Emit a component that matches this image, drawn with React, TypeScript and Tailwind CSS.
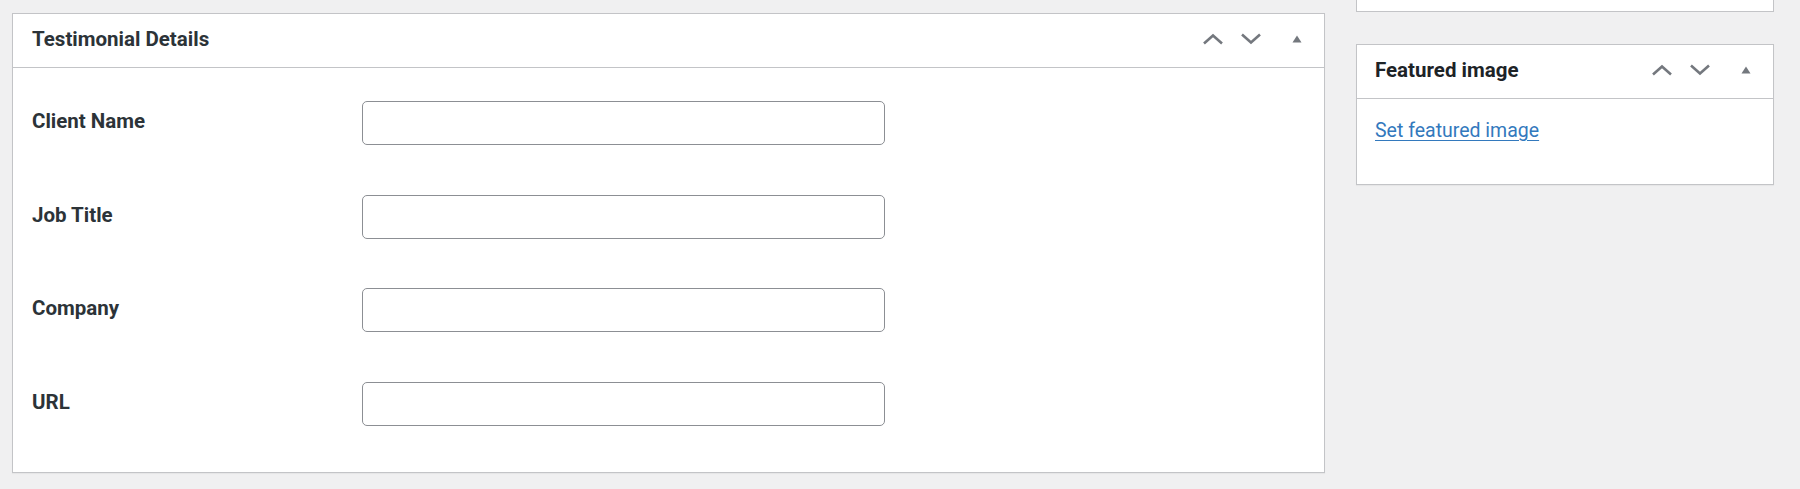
import React from 'react';

const fields = ['Client Name', 'Job Title', 'Company', 'URL'];

function HeaderControls() {
    return (
        <div className="flex items-center h-full text-[#74787e]">
            <button className="w-[38px] h-[36px] flex items-center justify-center" aria-label="Move up">
                <svg width="22" height="12" viewBox="0 0 22 12" fill="none">
                    <path d="M2 10.5L11 2.5L20 10.5" stroke="currentColor" strokeWidth="2.6" strokeLinejoin="miter" />
                </svg>
            </button>
            <button className="w-[38px] h-[36px] flex items-center justify-center" aria-label="Move down">
                <svg width="22" height="12" viewBox="0 0 22 12" fill="none">
                    <path d="M2 1.5L11 9.5L20 1.5" stroke="currentColor" strokeWidth="2.6" strokeLinejoin="miter" />
                </svg>
            </button>
            <button className="w-[54px] h-[36px] flex items-center justify-center" aria-label="Toggle panel">
                <svg width="10" height="8" viewBox="0 0 10 8">
                    <path d="M5 0.5L9.5 7.5H0.5Z" fill="currentColor" />
                </svg>
            </button>
        </div>
    );
}

export default function App() {
    return (
        <div
            className="w-full h-[489px] bg-[#f0f0f1] flex items-start pl-[12px] overflow-hidden text-[#1d2327]"
            style={{ fontFamily: 'Roboto, "Noto Sans", Arial, sans-serif' }}
        >
            {/* Testimonial Details */}
            <div className="mt-[13px] w-[1313px] bg-white border border-[#c3c4c7] shadow-[0_1px_1px_rgba(0,0,0,0.04)]">
                <div className="h-[54px] flex items-center justify-between border-b border-[#c3c4c7] pl-[19px] pb-[4px]">
                    <h2 className="text-[20.5px] leading-[24px] font-bold text-[#2c3338]">Testimonial Details</h2>
                    <HeaderControls />
                </div>
                <div className="pt-[33px] pb-[46px] pl-[19px] flex flex-col gap-[49.5px]">
                    {fields.map((label) => (
                        <div key={label} className="flex items-start">
                            <label className="w-[329.5px] mt-[8px] text-[20.5px] leading-[24px] font-bold text-[#2c3338]">
                                {label}
                            </label>
                            <input
                                type="text"
                                className="w-[523px] h-[44px] bg-white border border-[#8c8f94] rounded-[5px] px-3 outline-none"
                            />
                        </div>
                    ))}
                </div>
            </div>

            {/* Sidebar */}
            <div className="ml-[31px] w-[418px] flex flex-col">
                <div className="h-[12px] bg-white border border-t-0 border-[#c3c4c7]" />
                <div className="mt-[32px] bg-white border border-[#c3c4c7] shadow-[0_1px_1px_rgba(0,0,0,0.04)]">
                    <div className="h-[54px] flex items-center justify-between border-b border-[#c3c4c7] pl-[18px] pb-[4px]">
                        <h2 className="text-[20.5px] leading-[24px] font-bold">Featured image</h2>
                        <HeaderControls />
                    </div>
                    <div className="pt-[20px] pb-[40px] pl-[18px]">
                        <a href="#" className="text-[19.5px] leading-[24px] text-[#3379bd] underline underline-offset-[3px]">
                            Set featured image
                        </a>
                    </div>
                </div>
            </div>
        </div>
    );
}
